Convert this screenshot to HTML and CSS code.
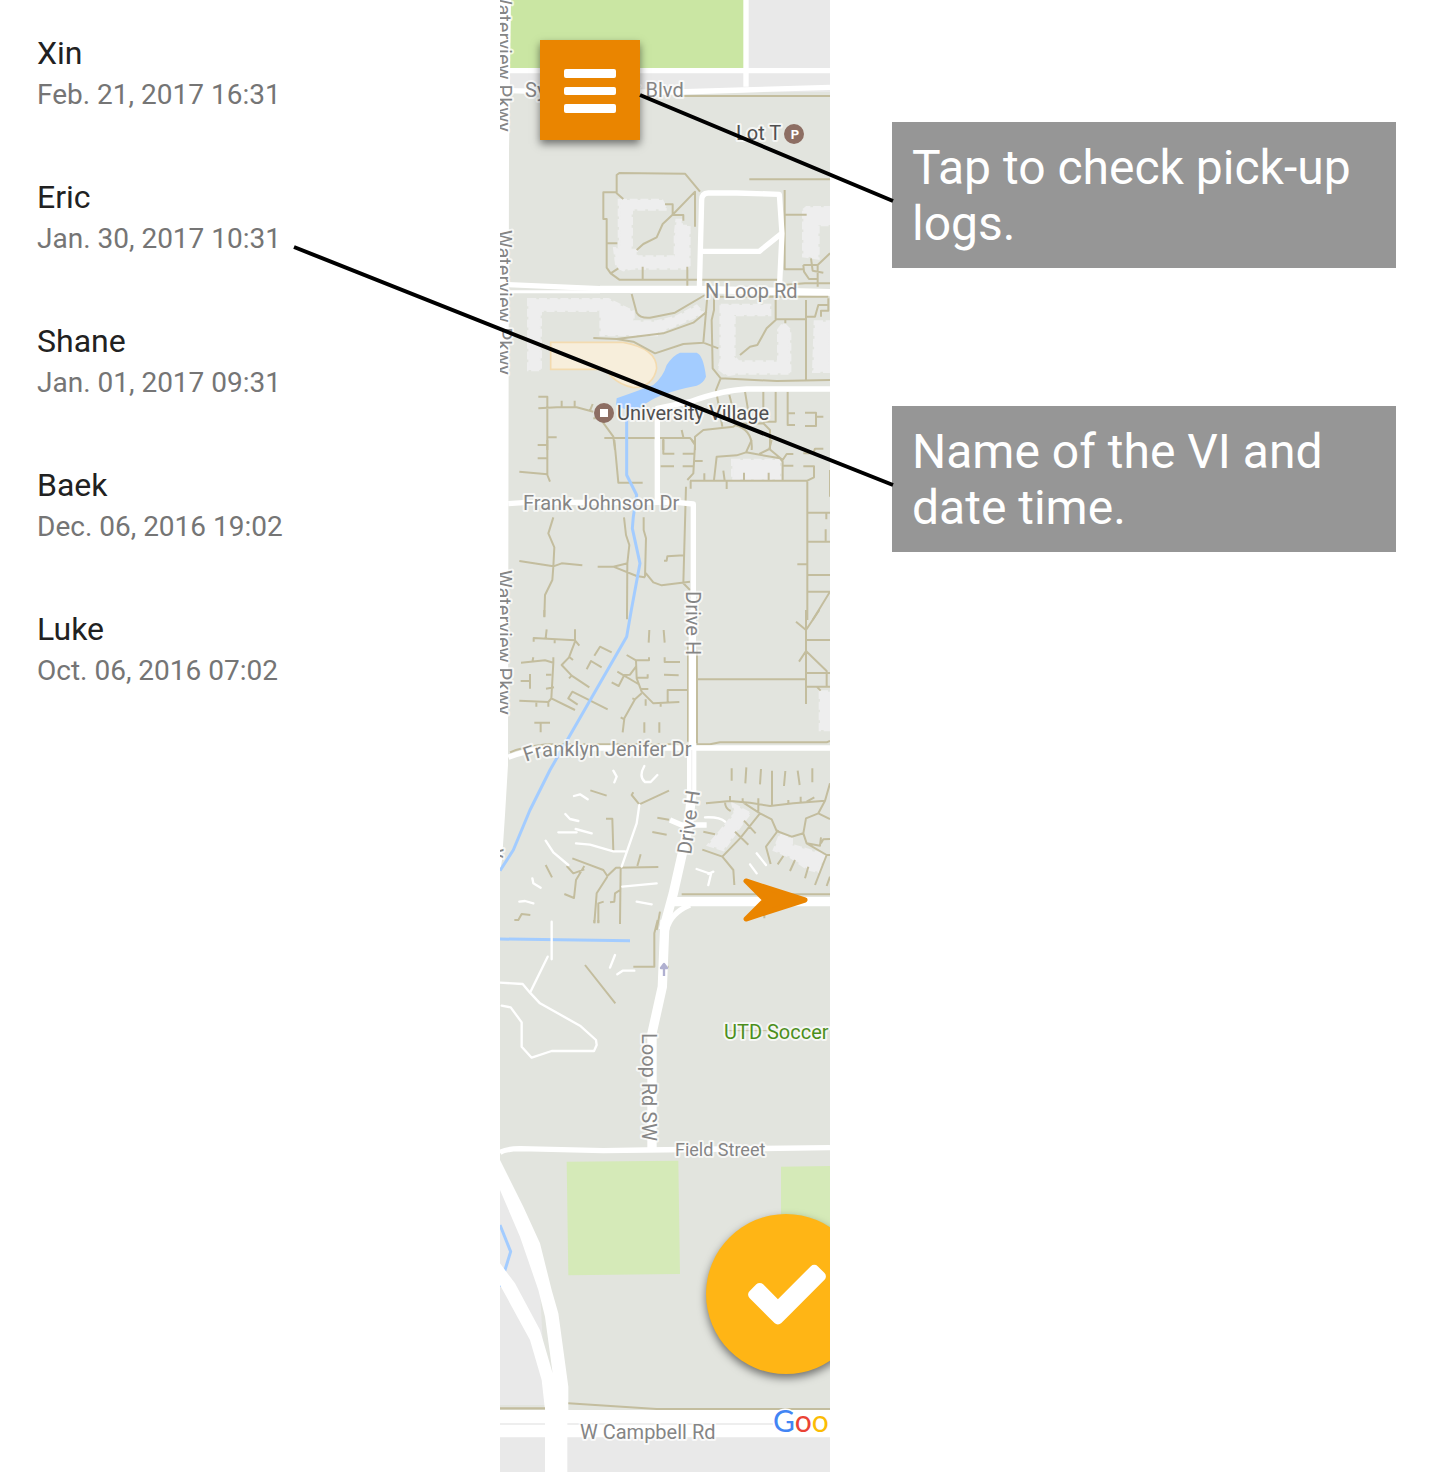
FILE: index.html
```html
<!DOCTYPE html>
<html lang="en">
<head>
<meta charset="utf-8">
<meta name="viewport" content="width=device-width, initial-scale=1">
<title>Pick-up logs</title>
<link rel="stylesheet" href="styles.css">
</head>
<body>
<main class="screen">
  <ul class="logs">
    <li class="log"><span class="log-name">Xin</span><time class="log-time" datetime="2017-02-21T16:31">Feb. 21, 2017 16:31</time></li>
    <li class="log"><span class="log-name">Eric</span><time class="log-time" datetime="2017-01-30T10:31">Jan. 30, 2017 10:31</time></li>
    <li class="log"><span class="log-name">Shane</span><time class="log-time" datetime="2017-01-01T09:31">Jan. 01, 2017 09:31</time></li>
    <li class="log"><span class="log-name">Baek</span><time class="log-time" datetime="2016-12-06T19:02">Dec. 06, 2016 19:02</time></li>
    <li class="log"><span class="log-name">Luke</span><time class="log-time" datetime="2016-10-06T07:02">Oct. 06, 2016 07:02</time></li>
  </ul>

  <section class="map" aria-label="Map">
    <svg class="map-art" viewBox="500 0 330 1472">
      <defs>
        <path id="jenifer-curve" d="M526 762Q540 756 556 756H720"/>
      </defs>

      <!-- ground -->
      <rect class="land" x="500" y="0" width="330" height="1472"/>
      <rect class="block" x="500" y="0" width="330" height="92"/>
      <rect class="park" x="510" y="0" width="234" height="68"/>
      <path class="block" d="M500 1185L520 1230 540 1290 546 1405H500z"/>
      <rect class="block" x="500" y="1436" width="330" height="36"/>
      <path class="white" d="M500 0H511L509 150 508 765 505 815 502 860 500 872z"/>

      <g transform="translate(490 0) scale(.33333)">
        <path class="road" d="M60 212H1020M768 0V260M60 272L200 276H560L760 270 1020 262"/>
        <path class="trail" d="M580 288H1020"/>
      </g>

      <g transform="translate(490 150) scale(.33333)">
        <path class="building" d="M387 150H515L530 178H425V300H440V320H555V255L560 210H575V228H598V355H425L400 360 380 350 373 295H387zM940 180L950 172H1030V225H985V325L940 318z"/>
        <path class="trail" d="M400 147L380 130V75L388 69 585 71 630 125M380 127H340V207H350V353L362 370 388 389H865M350 280H382M362 370L385 355M458 350V388M592 350V410M615 230V125L550 192 518 222 500 262 460 282 440 300M525 163H548V195H580V212M778 88H1030M884 120V358H940M884 194H950M940 345H983L1020 310M940 345L942 365 957 387H983M983 345V410M963 325L968 362 1000 368M880 405L945 400H1020"/>
        <path class="road" d="M628 420L635 150Q635 130 655 129H740L868 133 876 250 868 420M632 304H808L875 250"/>
        <path class="road narrow" d="M55 425H330"/>
        <path class="road" d="M55 404L330 416H560"/>
        <path class="road wide" d="M330 418L620 418 1020 428"/>
      </g>

      <g transform="translate(490 290) scale(.33333)">
        <path class="building" d="M115 28H355L430 65V95H500L560 80 620 48 640 70 500 130V135H332V62H152V240H115zM692 45H840V75H733V200L745 215H865V120L880 100 900 120V250H745L710 255 685 235 692 215zM975 95H1020V245H970z"/>
        <path class="sand" d="M182 157H400Q500 175 500 235 490 290 430 293 390 285 365 260L345 238H182z"/>
        <path class="lake" d="M380 325Q450 300 490 285 520 260 530 225 550 195 570 188H620Q640 195 648 260 640 280 620 287 500 310 455 350L425 365 410 360 378 345z"/>
        <path class="trail" d="M425 12L440 68Q450 85 480 83L555 68 645 15M310 144L380 147 520 130 610 98 650 65M380 147L430 155 495 190 580 162 640 158 685 175M652 20L640 158M672 15V60L665 90 668 235 692 265 678 300 697 410M692 265L860 273 1020 270M690 20H1015M857 15V90L830 115 802 165 780 170 750 195M857 88H948M886 88V100M948 30V270M948 80H975L985 45H1015M993 80V62H1015V25M145 320H172V480M145 355L215 351 260 352 310 365M215 332V351M254 332V352M300 362L308 342M172 442H200M145 465H172M310 385H330L370 440 375 480M343 444H600L615 460V480M575 420L580 442M615 480V440L640 420 730 410 740 402 820 400 840 420V480M718 315L740 400M765 305L775 365M820 305V370M857 305V395H820M893 305V405H915M893 370H915M945 368H978V408H945M978 380H1000M735 405Q790 420 785 480M520 445V480"/>
        <path class="road" d="M502 480V355L600 335Q700 300 770 297H1020"/>
      </g>

      <g transform="translate(490 440) scale(.33333)">
        <path class="building" d="M727 60H870V118H727z"/>
        <path class="trail" d="M172 0V105L180 125M88 95L172 103M143 15H172M143 55H172M373 0L385 128H458M520 0V41H553M512 79H552M578 41H613M578 79H610M605 0L615 15 610 100 592 120M613 63H638M600 122H952L972 112V79H940M602 122V146M710 122V147M643 100V122M700 92L704 122M672 120L680 50 740 46 768 37 870 55 878 65V120M785 0L768 37M845 0L838 27 808 42M838 27L878 60 890 42H910M878 77H910M940 40H970L975 26H1000M762 98V122M836 98V122M588 140L580 430 600 450M952 125V540M952 218H1020M1009 218V238M1007 268V305M952 305H1020M922 373H952M952 405H1020M952 455H1020L968 540M1020 90V170M190 232L175 280 193 322 190 380 187 420 165 465 163 530M88 363L190 379 215 370 277 376M323 380H370L413 370M370 380L440 408 463 412 468 400 490 427 515 436 600 425M402 232L408 285 418 315 412 370 411 535M461 232V270L468 295 465 410M582 346L532 349 530 362H522"/>
        <path class="road" d="M502 0V190M55 191L110 187H560L610 192V540"/>
      </g>

      <g transform="translate(490 610) scale(.33333)">
        <path class="building" d="M990 245H1030V360H990z"/>
        <path class="trail" d="M163 0V22M411 0V28M131 95V84L255 91V58M167 84L170 58M194 90V100M255 91L268 107M255 95L237 142 215 165 245 197 298 232M237 140L249 150M237 205L245 197M93 158L165 151 190 158 184 265 255 300M127 155L130 142M190 158V142M168 194H184M168 236L192 232M92 213H120M120 192V236M88 272L175 276 184 265M139 276V290M175 276V290M313 137L330 110 365 127M290 178L303 153 335 172M353 298L247 245 235 265 263 284M133 338H180M152 338V367M478 60L476 98M521 60L524 98M410 135L438 151 440 205 455 245 490 280 568 276M438 151H477V142M524 142V156H570M522 194L566 196M382 185L445 222M438 170L420 194 403 195 386 228 365 217M440 203H473V193M450 237H475M455 250L435 268 403 325 398 367M427 265L435 268M392 322L403 328M467 268V287M512 280V290M533 276V240H592M463 337V368M508 337V368M594 100V395M621 120V400M620 208H947M948 0V282M918 35L948 60 988 0M948 90H1020M927 155L948 123 1010 183V230M948 189H1020M948 230H1020M980 230L992 242M60 427Q100 410 170 403H600M620 403H660L690 397H1010L1020 393"/>
        <path class="road wide" d="M607 0V480"/>
        <path class="road" d="M55 442Q110 420 180 414H1020"/>
      </g>

      <g transform="translate(490 750) scale(.33333)">
        <path class="building" d="M728 162L780 190 760 215 700 300 655 285 690 245 735 190zM870 255L905 265V285L1005 315 985 365 955 358 900 320 852 300z"/>
        <path class="trail" d="M725 55V92M769 52L766 100M813 57L810 103M846 62V165M886 63L882 108M923 62L929 105M967 55V97M648 160L720 153 780 158 840 168 910 160 1005 152 1020 100M720 138V153M805 145V190M895 150V165M932 140V155M950 155L973 142M758 145V155M705 155Q705 175 722 183M760 158L810 190 845 208 860 243 905 260 940 250 948 205 985 190 1005 152M810 190L750 265 697 320 637 299M697 320L730 360 733 405M762 212L797 250M735 245L775 284M640 245L675 253M865 240L828 290 842 342M940 250L950 280 1010 315 975 405M985 190L1020 207M950 280L990 287 993 262M993 280L1000 268 1020 267M1010 315H1020M880 318L863 343M915 330L900 363M955 350L945 385M1020 380L1010 408M301 121L350 137M430 127L425 135 448 163 537 122M348 206H367L370 303M247 325L340 360 352 378 378 353 505 351M283 348L258 390 252 444 223 432M230 348L250 370 283 358M452 313L442 348M392 353L390 520M390 420L375 430 373 455 360 457M352 380L320 430 313 520M325 520V460L341 455M167 345L186 382M73 510H85L95 492 121 495M502 203L537 209M487 246L530 254M575 433H1020M510 485L500 540M823 490V505"/>
        <path class="lane" d="M370 62L380 80 373 97M463 48Q445 80 465 96H482L502 75M252 138L270 133 293 148M226 192L240 207 265 213M205 247H260M257 237L305 250M258 280L300 284 370 304H405M448 165L440 220 395 350M167 272L190 307 235 345M397 410L500 400M127 385L130 400 152 413M88 455L105 453 130 460M440 455L485 463M620 357L663 372 655 405M655 372L670 365M645 202Q690 200 705 215M780 343L800 370M800 310L828 345"/>
        <path class="road" d="M540 210L575 225H650M600 465Q540 490 530 540"/>
        <path class="road broad" d="M605 0V130L595 230 550 430 520 540M550 455H1020"/>
        <path class="median" d="M605 0V120"/>
      </g>

      <g transform="translate(490 920) scale(.33333)">
        <path class="trail" d="M503 0L493 40V140H430M525 140H536M285 135L376 250M313 0V8M325 0V8M390 0V12"/>
        <path class="stream" d="M30 57L420 62"/>
        <path class="lane" d="M185 5V118M173 110L120 218M30 188L98 192 120 218 150 250 270 317 318 360 320 375 312 393H185L125 413 95 380V307L62 262 35 257M375 105L360 143M382 163L398 152H433"/>
        <path class="road broad" d="M525 0L517 200 486 340V690"/>
        <path class="oneway" d="M522 168V134M513 144L522 132 531 144z"/>
        <path class="trail faint" d="M705 332H1020"/>
      </g>

      <g transform="translate(490 1100) scale(.33333)">
        <path class="field" d="M230 185L565 182 570 522 235 526zM873 200L1030 198V480H873z"/>
        <path class="stream" d="M30 375L62 455 45 510 30 560"/>
        <path class="white" d="M30 180L100 320 150 430 185 570 205 640 235 860V930H165L155 840 120 720 30 555V490L75 550 150 690 188 820 165 650 145 570 90 410 30 270z"/>
        <path class="road" d="M30 158Q45 147 90 146L340 152 470 150 1020 143"/>
      </g>

      <g transform="translate(490 1280) scale(.33333)">
        <path class="trail thick" d="M30 385H165"/>
        <path class="trail" d="M235 370L500 387H1020"/>
        <path class="white" d="M30 390H1020V472H30zM165 350H232V576H165z"/>
        <path class="seam" d="M30 432H165M232 432H850"/>
      </g>

      <path class="stream" transform="scale(.33333)" d="M1880 1210V1425L1910 1485 1900 1550 1897 1585 1920 1690 1894 1830 1880 1910 1650 2310 1590 2430 1540 2550 1500 2612"/>

      <!-- street names -->
      <g class="street">
        <text x="525" y="97">Synergy Park Blvd</text>
        <text x="705" y="298">N Loop Rd</text>
        <text x="523" y="510">Frank Johnson Dr</text>
        <text><textPath href="#jenifer-curve">Franklyn Jenifer Dr</textPath></text>
        <text class="minor" x="675" y="1156">Field Street</text>
        <text x="580" y="1439">W Campbell Rd</text>
        <text transform="translate(497 -13) rotate(90)">Waterview Pkwy</text>
        <text transform="translate(497 230) rotate(90)">Waterview Pkwy</text>
        <text transform="translate(497 570) rotate(90)">Waterview Pkwy</text>
        <text transform="translate(493 848) rotate(94)">y</text>
        <text transform="translate(686 591) rotate(90)">Drive H</text>
        <text transform="translate(691 855) rotate(-82)">Drive H</text>
        <text transform="translate(642 1033) rotate(90)">Loop Rd SW</text>
      </g>
      <g class="place">
        <text x="736" y="140">Lot T</text>
        <text x="617" y="420">University Village</text>
        <text class="sport" x="724" y="1039">UTD Soccer</text>
      </g>
      <circle class="pin" cx="794" cy="134" r="10"/>
      <text class="pin-letter" x="795" y="139">P</text>
      <circle class="pin" cx="604" cy="413" r="10"/>
      <rect class="white" x="600" y="409" width="8" height="8"/>

      <text class="brand" x="773" y="1432"><tspan class="blue">G</tspan><tspan class="red">o</tspan><tspan class="yellow">o</tspan></text>
      <path class="heading" d="M746 881L805 900 746 919 765 900z"/>
    </svg>

    <button class="menu" type="button" aria-label="Pick-up logs">
      <svg viewBox="0 0 52 44" width="52" height="44"><rect y="0" width="52" height="9" rx="2"/><rect y="18" width="52" height="8" rx="2"/><rect y="35" width="52" height="9" rx="2"/></svg>
    </button>
    <button class="confirm" type="button" aria-label="Confirm">
      <svg viewBox="0 0 1792 1792" width="90" height="90"><path d="M1671 566q0 40-28 68l-724 724-136 136q-28 28-68 28t-68-28l-136-136-362-362q-28-28-28-68t28-68l136-136q28-28 68-28t68 28l294 295 656-657q28-28 68-28t68 28l136 136q28 28 28 68z"/></svg>
    </button>
  </section>

  <aside class="notes">
    <p class="note">Tap to check pick-up logs.</p>
    <p class="note">Name of the VI and date time.</p>
  </aside>

  <svg class="pointers" width="900" height="500" aria-hidden="true">
    <path d="M640 95L893 201M294 247L893 485"/>
  </svg>
</main>
</body>
</html>
```
FILE: styles.css
```css
* {
  box-sizing: border-box;
}

body {
  margin: 0;
  background: #fff;
  font-family: Roboto, "Liberation Sans", sans-serif;
}

.screen {
  position: relative;
  display: grid;
  grid-template-columns: 500px 330px 1fr;
  align-items: start;
}

/* log list */
.logs {
  margin: 0;
  padding: 0 37px;
  list-style: none;
}

.log {
  display: flex;
  flex-direction: column;
  padding: 32px 0 28px;
}

.log-name {
  font-size: 32px;
  line-height: 42px;
  color: #212121;
}

.log-time {
  font-size: 28px;
  line-height: 42px;
  color: #757575;
}

/* map */
.map {
  position: relative;
  overflow: hidden;
}

.map-art {
  display: block;
  width: 100%;
}

.land { fill: #e2e4de; }
.block { fill: #e9e9e9; }
.park { fill: #cae6a3; }
.field { fill: #d5eab8; }
.white { fill: #fff; }
.lake { fill: #a3ccff; }
.building { fill: #eee; stroke: #eee; stroke-width: 8; stroke-dasharray: 24 8; }
.sand { fill: #f7eedb; stroke: #f3dbb0; stroke-width: 5; }

.road,
.lane,
.trail,
.stream,
.seam,
.median,
.oneway {
  fill: none;
  stroke-linejoin: round;
}

.road { stroke: #fff; stroke-width: 16; }
.road.narrow { stroke-width: 9; }
.road.wide { stroke-width: 22; }
.road.broad { stroke-width: 28; }
.lane { stroke: #fff; stroke-width: 7; stroke-linecap: round; }
.trail { stroke: #c3bd9e; stroke-width: 6; }
.trail.thick { stroke-width: 7; }
.trail.faint { stroke-width: 3; }
.stream { stroke: #a3ccff; stroke-width: 9; }
.seam { stroke: #e9e9e9; stroke-width: 5; }
.median { stroke: #f3f3f3; stroke-width: 4; }
.oneway { stroke: #b0b0d0; stroke-width: 7; }

.street,
.place {
  font-size: 20px;
  paint-order: stroke;
  stroke: rgba(255, 255, 255, .7);
  stroke-width: 4px;
  stroke-linejoin: round;
}

.street { fill: #858585; }
.minor { font-size: 18px; }
.place { fill: #505050; }
.sport { fill: #4c8f1c; }
.pin { fill: #8d6e63; }

.pin-letter {
  fill: #fff;
  font-size: 13px;
  font-weight: 700;
  text-anchor: middle;
}

.brand {
  font-family: Lato, sans-serif;
  font-size: 30px;
  paint-order: stroke;
  stroke: #fff;
  stroke-width: 3px;
}

.blue { fill: #4285f4; }
.red { fill: #ea4335; }
.yellow { fill: #fbbc05; }

.heading {
  fill: #ea8500;
  stroke: #ea8500;
  stroke-width: 5;
  stroke-linejoin: round;
}

.menu,
.confirm {
  position: absolute;
  display: flex;
  align-items: center;
  justify-content: center;
  border: 0;
  fill: #fff;
  box-shadow: 0 4px 8px rgba(0, 0, 0, .5);
  cursor: pointer;
}

.menu {
  top: 40px;
  left: 40px;
  width: 100px;
  height: 100px;
  padding: 2px 0 0;
  background: #ea8500;
}

.confirm {
  right: -36px;
  bottom: 98px;
  width: 160px;
  height: 160px;
  padding: 0 0 2px 2px;
  border-radius: 50%;
  background: #ffb515;
}

/* callouts */
.notes {
  display: flex;
  flex-direction: column;
  gap: 138px;
  padding: 122px 44px 0 62px;
}

.note {
  margin: 0;
  padding: 18px 20px 16px;
  background: #969696;
  color: #fff;
  font-size: 48px;
  line-height: 56px;
}

.pointers {
  position: absolute;
  top: 0;
  left: 0;
  fill: none;
  stroke: #000;
  stroke-width: 4;
  pointer-events: none;
}
```
